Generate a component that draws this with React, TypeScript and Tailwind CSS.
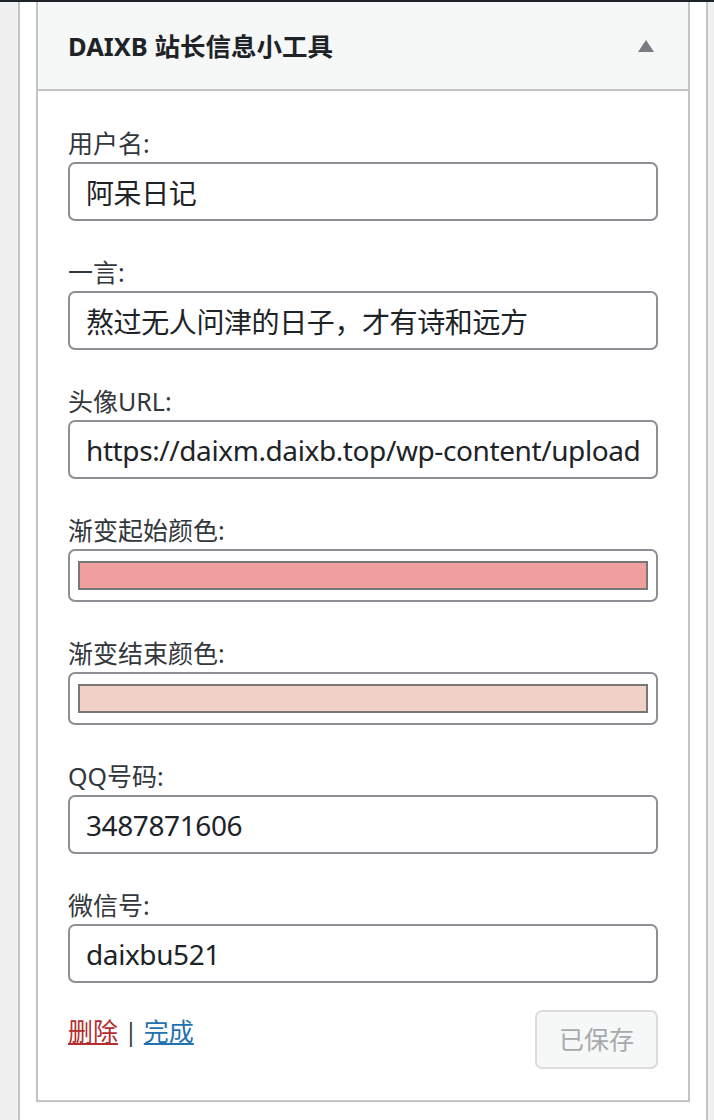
import React from 'react';

// ─────────────────────────────────────────────
// Data
// ─────────────────────────────────────────────

type Field =
  | { id: string; label: string; kind: 'text'; value: string }
  | { id: string; label: string; kind: 'color'; value: string };

const FIELDS: Field[] = [
  { id: 'name',   label: '用户名:',       kind: 'text',  value: '阿呆日记' },
  { id: 'motto',  label: '一言:',         kind: 'text',  value: '熬过无人问津的日子，才有诗和远方' },
  { id: 'avatar', label: '头像URL:',      kind: 'text',  value: 'https://daixm.daixb.top/wp-content/uploads/2023/avatar.png' },
  { id: 'from',   label: '渐变起始颜色:', kind: 'color', value: '#f09f9f' },
  { id: 'to',     label: '渐变结束颜色:', kind: 'color', value: '#f1d1c5' },
  { id: 'qq',     label: 'QQ号码:',       kind: 'text',  value: '3487871606' },
  { id: 'wechat', label: '微信号:',       kind: 'text',  value: 'daixbu521' },
];

// ─────────────────────────────────────────────
// Pieces
// ─────────────────────────────────────────────

const FieldRow: React.FC<{ field: Field }> = ({ field }) => (
  <div className="mb-[37px] last:mb-0">
    <label htmlFor={field.id} className="block h-[28px] leading-[28px] text-[25px] text-[#32373c] mb-[5px]">
      {field.label}
    </label>
    {field.kind === 'text' ? (
      <input
        id={field.id}
        type="text"
        readOnly
        defaultValue={field.value}
        className="block w-full h-[59px] px-[16px] border-2 border-[#8c8f94] rounded-[7px] bg-white text-[28px] tracking-[-0.4px] text-[#1d2327] outline-none"
      />
    ) : (
      <div className="h-[53px] border-2 border-[#8c8f94] rounded-[7px] bg-white px-[8px] py-[10px]">
        <div
          className="h-full border-2 border-[#777777]"
          style={{ backgroundColor: field.value }}
        />
      </div>
    )}
  </div>
);

// ─────────────────────────────────────────────
// Main Component
// ─────────────────────────────────────────────

export default function App() {
  return (
    <div className="w-[714px] h-[1120px] overflow-hidden flex flex-col bg-[#f0f0f0] font-['Noto_Sans','Noto_Sans_CJK_SC',sans-serif]">
      <div className="h-[2px] bg-[#1d2327] shrink-0" />

      <div className="flex-1 ml-[18px] mr-[6px] border-x-2 border-[#c3c4c7] bg-white px-[16px]">
        <div className="border-2 border-t-0 border-[#c3c4c7] bg-white shadow-[0_1px_1px_rgba(0,0,0,0.04)]">
          {/* Header */}
          <div className="h-[89px] flex items-center justify-between pl-[30px] pr-[34px] pt-[3px] bg-[#f6f7f7] border-b-2 border-[#c3c4c7]">
            <h3 className="text-[25.5px] font-bold text-[#1d2327] leading-none">DAIXB 站长信息小工具</h3>
            <svg width="16" height="12" viewBox="0 0 16 12" className="-mt-[3px]">
              <polygon points="8,0 16,12 0,12" fill="#787c82" />
            </svg>
          </div>

          {/* Body */}
          <div className="px-[30px] pt-[38px] pb-[31px]">
            <div>
              {FIELDS.map(f => (
                <FieldRow key={f.id} field={f} />
              ))}
            </div>

            {/* Footer */}
            <div className="mt-[27px] flex items-start justify-between">
              <div className="mt-[7px] h-[28px] leading-[28px] text-[25px] text-[#3c434a]">
                <a href="#" className="text-[#b32d2e] underline">删除</a>
                <span className="mx-[6px]">|</span>
                <a href="#" className="text-[#2271b1] underline">完成</a>
              </div>
              <button
                disabled
                className="h-[59px] px-[22px] border-2 border-[#dcdcde] rounded-[7px] bg-[#f6f7f7] text-[25px] text-[#a7aaad]"
              >
                已保存
              </button>
            </div>
          </div>
        </div>
      </div>
    </div>
  );
}
